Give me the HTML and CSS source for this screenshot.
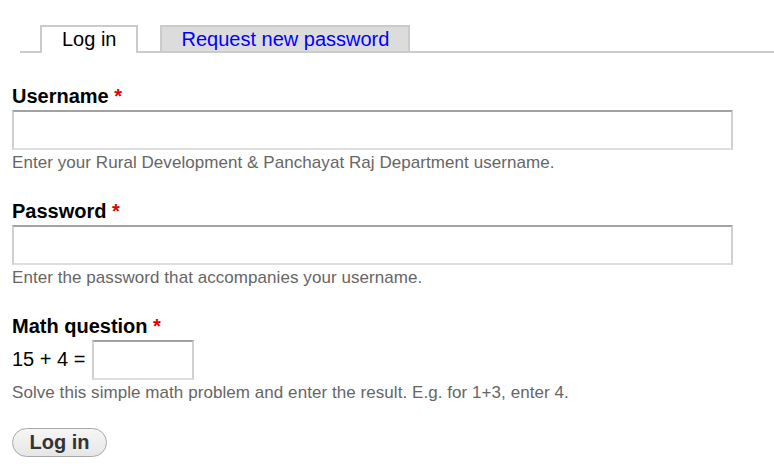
FILE: index.html
```html
<!DOCTYPE html>
<html>
<head>
<meta charset="utf-8">
<link rel="stylesheet" href="styles.css">
</head>
<body>
<ul class="tabs">
  <li class="tab tab-active"><a href="#">Log in</a></li>
  <li class="tab"><a href="#">Request new password</a></li>
</ul>
<form class="login-form">
  <div class="form-item">
    <label class="form-label">Username <span class="req">*</span></label>
    <input class="text-input" type="text">
    <div class="desc">Enter your Rural Development &amp; Panchayat Raj Department username.</div>
  </div>
  <div class="form-item">
    <label class="form-label">Password <span class="req">*</span></label>
    <input class="text-input" type="password">
    <div class="desc">Enter the password that accompanies your username.</div>
  </div>
  <div class="form-item">
    <label class="form-label">Math question <span class="req">*</span></label>
    <div class="math-row">
      <span class="math-q">15 + 4 =</span>
      <input class="math-input" type="text">
    </div>
    <div class="desc">Solve this simple math problem and enter the result. E.g. for 1+3, enter 4.</div>
  </div>
  <button class="btn" type="button">Log in</button>
</form>
</body>
</html>
```

FILE: styles.css
```css
html, body {
  margin: 0;
  padding: 0;
  background: #fff;
  font-family: "Liberation Sans", Arial, sans-serif;
  color: #000;
}

.tabs {
  list-style: none;
  margin: 25px 0 0 20px;
  padding: 0 0 0 20px;
  display: flex;
  gap: 22px;
  border-bottom: 2px solid #cbcbcb;
  height: 26px;
}

.tab {
  display: block;
}

.tab a {
  display: block;
  height: 24px;
  line-height: 24px;
  font-size: 20px;
  padding: 0 19px 0 20px;
  border: 2px solid #cbcbcb;
  border-bottom: none;
  background: #dcdcdc;
  color: #0000ff;
  text-decoration: none;
}

.tab-active a {
  background: #fff;
  color: #000;
  height: 26px;
}

.login-form {
  padding: 31px 12px 0 12px;
}

.form-item {
  margin-bottom: 26px;
}

.form-label {
  display: block;
  font-size: 20px;
  font-weight: bold;
  line-height: 22px;
  padding-top: 1px;
  margin-bottom: 3px;
}

.req {
  color: #e00000;
}

.text-input {
  display: block;
  box-sizing: border-box;
  width: 721px;
  height: 40px;
  margin: 0;
  border: 2px solid;
  border-color: #a2a2a2 #d0d0d0 #dedede #d0d0d0;
  background: #fff;
  font-size: 16px;
}

.desc {
  margin-top: 3px;
  font-size: 17px;
  line-height: 20px;
  letter-spacing: 0.06px;
  color: #666;
}

.math-row {
  display: flex;
  align-items: center;
}

.math-q {
  font-size: 20px;
  line-height: 23px;
  margin-right: 7px;
  position: relative;
  top: -1px;
}

.math-input {
  box-sizing: border-box;
  width: 102px;
  height: 40px;
  margin: 0;
  border: 2px solid;
  border-color: #a2a2a2 #d0d0d0 #dedede #d0d0d0;
  background: #fff;
  font-size: 16px;
}

.btn {
  display: block;
  margin-top: -1px;
  box-sizing: border-box;
  width: 95px;
  height: 29px;
  padding: 0 0 2px 0;
  border: 1px solid #a8a8a8;
  border-radius: 15px;
  background: linear-gradient(#f6f6f6, #e6e6e6);
  font-family: "Liberation Sans", Arial, sans-serif;
  font-size: 20px;
  font-weight: bold;
  line-height: 26px;
  color: #333;
}
```
